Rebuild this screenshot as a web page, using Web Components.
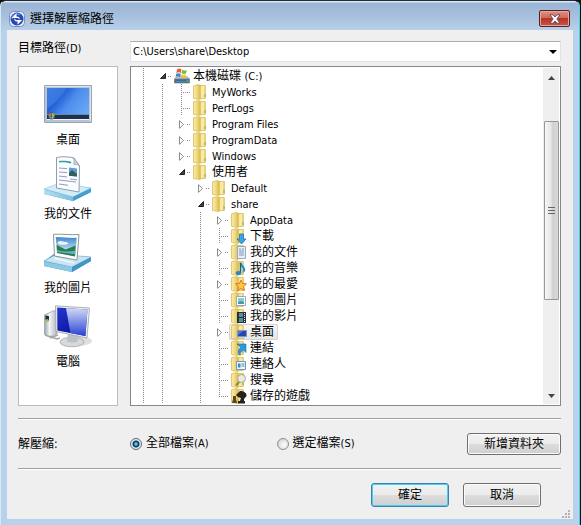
<!DOCTYPE html>
<html lang="zh-Hant">
<head>
    <meta charset="UTF-8">
    <meta name="viewport" content="width=device-width, initial-scale=1.0">
    <title>選擇解壓縮路徑</title>
    <style>
        body {
            margin: 0;
            background: #111;
            color: #000;
            font: 12px/16px "DejaVu Sans Condensed", "Noto Sans CJK TC", sans-serif;
            --side: 100px;
            --line: #a0a0a0;
        }
        .en { font-size: 11px; }
    </style>
</head>
<body>
    <dialog-window>
        <span slot="title">選擇解壓縮路徑</span>

        <path-picker></path-picker>

        <folder-browser>
            <side-place slot="side" icon="desktop">桌面</side-place>
            <side-place slot="side" icon="documents">我的文件</side-place>
            <side-place slot="side" icon="pictures">我的圖片</side-place>
            <side-place slot="side" icon="computer">電腦</side-place>

            <!-- lines: | guide, . empty, t branch, L last branch, > closed, v open -->
            <tree-row lines="|v" icon="disk">本機磁碟 <span class="en">(C:)</span></tree-row>
            <tree-row lines="||t"><span class="en">MyWorks</span></tree-row>
            <tree-row lines="||t"><span class="en">PerfLogs</span></tree-row>
            <tree-row lines="||>"><span class="en">Program Files</span></tree-row>
            <tree-row lines="||>"><span class="en">ProgramData</span></tree-row>
            <tree-row lines="||>"><span class="en">Windows</span></tree-row>
            <tree-row lines="||v">使用者</tree-row>
            <tree-row lines="||.>"><span class="en">Default</span></tree-row>
            <tree-row lines="||.v"><span class="en">share</span></tree-row>
            <tree-row lines="||.|>"><span class="en">AppData</span></tree-row>
            <tree-row lines="||.|t" badge="download">下載</tree-row>
            <tree-row lines="||.|>" badge="doc">我的文件</tree-row>
            <tree-row lines="||.|t" badge="music">我的音樂</tree-row>
            <tree-row lines="||.|>" badge="star">我的最愛</tree-row>
            <tree-row lines="||.|t" badge="picture">我的圖片</tree-row>
            <tree-row lines="||.|t" badge="film">我的影片</tree-row>
            <tree-row lines="||.|>" badge="screen" selected>桌面</tree-row>
            <tree-row lines="||.|t" badge="link">連結</tree-row>
            <tree-row lines="||.|t" badge="contact">連絡人</tree-row>
            <tree-row lines="||.|t" badge="search">搜尋</tree-row>
            <tree-row lines="||.|L" badge="game">儲存的遊戲</tree-row>
        </folder-browser>

        <extract-options>
            <push-button slot="action">新增資料夾</push-button>
        </extract-options>

        <button-bar>
            <push-button wide primary>確定</push-button>
            <push-button wide>取消</push-button>
        </button-bar>
    </dialog-window>

    <template id="window-tpl">
        <style>
            :host {
                display: flex;
                flex-direction: column;
                box-sizing: border-box;
                min-height: 100vh;
                margin-right: 1px;
                padding: 0 6px 6px 6px;
                border: solid;
                border-width: 1px 1px 0 1px;
                border-color: #262b38 #3fd6ec #3fd6ec #d9e8f6;
                border-radius: 6px 6px 0 0;
                background: linear-gradient(#dce9f5 0 1px, #9ab5d4 2px, #a5bfdc 14px, #b9d1ea 30px);
            }
            header {
                display: flex;
                align-items: center;
                height: 29px;
                padding: 6px 3px 0 2px;
                box-sizing: border-box;
            }
            .logo { width: 16px; height: 16px; margin-right: 5px; }
            h1 { flex: 1; margin: 0; font: inherit; }
            .close {
                width: 31px;
                height: 17px;
                padding: 0;
                display: grid;
                place-items: center;
                border: 1px solid #571f22;
                border-radius: 2px;
                box-shadow: inset 0 0 0 1px #e5a79d;
                background: linear-gradient(#dc9287, #cf6658 48%, #b53527 50%, #c95445);
            }
            main {
                flex: 1;
                display: flex;
                flex-direction: column;
                padding: 11px 12px 0 11px;
                background: #efefef;
            }
            footer { display: flex; justify-content: flex-end; margin-top: auto; margin-right: -9px; padding-bottom: 1px; }
        </style>
        <header>
            <svg class="logo" viewBox="0 0 16 16">
                <rect x=".5" y=".5" width="15" height="15" rx="4" fill="#e8edf8" stroke="#7d8cb8"/>
                <circle cx="8" cy="8" r="6.5" fill="#2849b4"/>
                <path d="M3 8a5 5 0 0 1 8-4" fill="none" stroke="#5f86e0" stroke-width="1.5"/>
                <path d="M7.500 2.200v3.300c2.600 0 3.300 1.200 3.100 3L9 7H2.800zM8.500 13.800v-3.300c-2.600 0-3.300-1.200-3.100-3L7 9h6.200z" fill="#fff"/>
            </svg>
            <h1><slot name="title"></slot></h1>
            <button class="close" aria-label="關閉">
                <svg width="12" height="10" viewBox="0 0 12 10">
                    <path d="M1 .8h3l2 2.200 2-2.200h3L7.900 5 11 9.200H8L6 7 4 9.200H1L4.100 5z" fill="#fff" stroke="#5a4a55" stroke-width=".9"/>
                </svg>
            </button>
        </header>
        <main>
            <slot></slot>
            <footer>
                <svg width="8" height="8" viewBox="0 0 8 8" fill="#b4b4b4">
                    <path d="M6 0h2v2H6zM3 3h2v2H3zM6 3h2v2H6zM0 6h2v2H0zM3 6h2v2H3zM6 6h2v2H6z"/>
                </svg>
            </footer>
        </main>
    </template>

    <template id="picker-tpl">
        <style>
            :host { display: grid; grid-template-columns: var(--side) 1fr; column-gap: 12px; }
            label { line-height: 15px; }
            .latin { font-size: 11px; }
            .box { display: grid; }
            select, svg { grid-area: 1 / 1; }
            select {
                appearance: none;
                height: 21px;
                margin: 0;
                padding: 0 20px 0 2px;
                border: 1px solid #dde5ea;
                border-top-color: #abadb3;
                border-radius: 0;
                background: #fff;
                color: inherit;
                font: inherit;
                font-size: 11px;
            }
            svg { justify-self: end; align-self: center; margin-right: 4px; pointer-events: none; }
        </style>
        <label for="path">目標路徑<span class="latin">(D)</span></label>
        <div class="box">
            <select id="path"><option>C:\Users\share\Desktop</option></select>
            <svg width="8" height="4" viewBox="0 0 8 4"><path d="M0 0h8L4 4z"/></svg>
        </div>
    </template>

    <template id="browser-tpl">
        <style>
            :host { display: grid; grid-template-columns: var(--side) 1fr; column-gap: 12px; margin-top: 4px; }
            nav {
                display: flex;
                flex-direction: column;
                gap: 6px;
                padding-top: 13px;
                border: 1px solid #bcbcbc;
                background: #fff;
            }
            .tree { display: flex; border: 1px solid #828790; background: #fff; }
            .rows { flex: 1; min-width: 0; padding: 1px 0 1px 3px; }
            .bar {
                display: flex;
                flex-direction: column;
                align-items: center;
                width: 16px;
                margin: 1px 1px 1px 0;
                background: #efefef;
            }
            .up { margin: 8px 0 41px; }
            .down { margin: auto 0 6px; }
            .thumb {
                display: grid;
                place-items: center;
                width: 13px;
                height: 177px;
                border: 1px solid #979797;
                border-radius: 1px;
                background: linear-gradient(90deg, #f7f7f7, #e6e6e6 45%, #cfcfcf 60%, #d9d9d9);
            }
        </style>
        <nav><slot name="side"></slot></nav>
        <div class="tree">
            <div class="rows" role="tree"><slot></slot></div>
            <div class="bar">
                <svg class="up" width="7" height="4" viewBox="0 0 7 4"><path d="M0 4h7L3.500 0z" fill="#444"/></svg>
                <div class="thumb">
                    <svg width="7" height="8" viewBox="0 0 7 8" fill="#666"><path d="M0 0h7v1H0zM0 3h7v1H0zM0 6h7v1H0z"/></svg>
                </div>
                <svg class="down" width="7" height="4" viewBox="0 0 7 4"><path d="M0 0h7L3.500 4z" fill="#444"/></svg>
            </div>
        </div>
    </template>

    <template id="options-tpl">
        <style>
            :host {
                display: grid;
                grid-template-columns: var(--side) 1fr auto;
                column-gap: 12px;
                align-items: center;
                height: 49px;
                margin-top: 12px;
                border: solid var(--line);
                border-width: 1px 0;
                box-shadow: 0 1px #fff, inset 0 1px #fff;
            }
            .group { display: flex; gap: 68px; }
            label { display: flex; align-items: center; gap: 4px; }
            .latin { font-size: 11px; }
            input {
                appearance: none;
                box-sizing: border-box;
                width: 12px;
                height: 12px;
                margin: 0;
                border: 1px solid #8e8f8f;
                border-radius: 50%;
                background: radial-gradient(circle at 60% 60%, #f4f4f4 20%, #c5c8cc);
            }
            input:checked {
                border-color: #5c6e80;
                background: radial-gradient(circle, #5fc3ef 0 1px, #17618f 2px, #0c3658 3px, #e4ecf2 4px);
            }
        </style>
        <span id="name">解壓縮:</span>
        <div class="group" role="radiogroup" aria-labelledby="name">
            <label><input type="radio" name="scope" checked><span>全部檔案<span class="latin">(A)</span></span></label>
            <label><input type="radio" name="scope"><span>選定檔案<span class="latin">(S)</span></span></label>
        </div>
        <slot name="action"></slot>
    </template>

    <script>
        // 48x48
        const placeIcons = {
            desktop: `
                <defs><linearGradient id="g" x2="1" y2=".6"><stop stop-color="#2f6fd8"/><stop offset=".35" stop-color="#2262d6"/><stop offset=".6" stop-color="#4d8cec"/><stop offset="1" stop-color="#69a6f6"/></linearGradient></defs>
                <path d="M.5 5.500h47v37H.5z" fill="#b9c4d2" stroke="#97a4b5"/>
                <path d="M1.500 6.500h45v35" fill="none" stroke="#dfe6ee"/>
                <path d="M3 8h42v32H3z" fill="url(#g)"/>
                <path d="M3 8h20C17 18 9 25 3 28z" fill="#5f9bf0" opacity=".35"/>
                <path d="M3 34h42v5H3z" fill="#1d3050"/><path d="M3 34h42v1H3z" fill="#6a86ad"/>
                <path d="M3 39h42v1H3z" fill="#f2f6fa"/>
                <circle cx="7.500" cy="36" r="3.600" fill="#2c5a78"/>
                <path d="M4.500 33.500l2.700-.6v3H4.500z" fill="#e8643a"/><path d="M7.800 33l2.700.6v2.300H7.800z" fill="#8bc64a"/>
                <path d="M4.500 36.500h2.700v2.800z" fill="#4aa5e8"/><path d="M7.800 36.500h2.700l-2.700 2.800z" fill="#f4cc45"/>`,
            documents: `
                <defs><linearGradient id="g" x2="1"><stop stop-color="#b7dff0"/><stop offset="1" stop-color="#7dbfe0"/></linearGradient></defs>
                <path d="M0 36l15-5 32 3v4L29 47 0 40z" fill="#3f9cc9"/>
                <path d="M0 35l16-6 31 5-18 9z" fill="#d3edf7" stroke="#86bedb" stroke-width=".6"/>
                <path d="M0 35.500l29 7.500v4L0 40z" fill="url(#g)"/>
                <path d="M29 43l18-8.500V38l-18 9z" fill="#479fce"/>
                <path d="M12.500 3.500c7-1.400 11-.6 17 .2l6 8-.5 26.300-22.500-4z" fill="#fbfcff" stroke="#8e9dad"/>
                <path d="M29.500 3.700c1 3 .8 5 .2 6.600 2 .2 4 .3 5.800 1.400z" fill="#cad5e1" stroke="#8898aa" stroke-width=".7"/>
                <path d="M15 7c4-.6 7-.4 12 .8v1.700C22 8.200 19 8 15 8.500z" fill="#349a9c"/>
                <path d="M15 14l8 .6M15 18l8 .6M15 22l8 1M15 26l17 2M15 30l9 1.300M26 25l7 .8" stroke="#9599b8" fill="none"/>
                <path d="M25 13.500l8 1v8l-8-.8z" fill="#5c9fd8"/><path d="M25 19l3-3 5 4v2.500l-8-.8z" fill="#355e58"/>`,
            pictures: `
                <defs><linearGradient id="g" x2="0" y2="1"><stop stop-color="#3d86cf"/><stop offset=".6" stop-color="#a8d6ee"/></linearGradient></defs>
                <path d="M0 33l10-7 37 3v4L28 44 0 38z" fill="#3b93c2"/>
                <path d="M0 33l13-7 34 3-19 10z" fill="#c9e5f1" stroke="#7eb6d3" stroke-width=".6"/>
                <path d="M0 33.500L28 39v5L0 38z" fill="#8cc8e3"/>
                <path d="M28 39l19-9.500V33L28 44z" fill="#4296c5"/>
                <path d="M9.500 6.300c10-.6 17 1 25.500.2l-2 25.500-22.500-4z" fill="#fff" stroke="#8c959c"/>
                <path d="M11.700 9c8 0 14 1.200 21 .8l-1.500 18.500-18-3.300z" fill="url(#g)"/>
                <path d="M14 14c3-2 5 0 7 0s4 1 3 2-8 1-10 0z" fill="#fff" opacity=".85"/>
                <path d="M12.600 17l5 2.500 4 2 10-4-.6 11-18-3.500z" fill="#2f7a4a"/>
                <path d="M13 22c6 2 12 2 18.400.8l-.2 3.500-18-2.300z" fill="#5fb6c8"/>
                <path d="M10 30l20 5" stroke="#eef8fc" stroke-width="1.500"/>`,
            computer: `
                <defs>
                    <linearGradient id="g" x2="1" y2="0"><stop stop-color="#9aa2ab"/><stop offset=".4" stop-color="#f2f4f6"/><stop offset="1" stop-color="#b3b8bd"/></linearGradient>
                    <linearGradient id="h" x2=".6" y2="1"><stop stop-color="#2338d0"/><stop offset="1" stop-color="#0a109c"/></linearGradient>
                    <linearGradient id="k" x2="0" y2="1"><stop stop-color="#f2f7ff"/><stop offset="1" stop-color="#2c4ce0"/></linearGradient>
                </defs>
                <ellipse cx="34" cy="39" rx="14" ry="5" fill="#ccc" opacity=".6"/>
                <path d="M.5 13L10 8.500l3 1.500v22l-8 3-4.500-2.500z" fill="url(#g)" stroke="#969da4" stroke-width=".7"/>
                <path d="M1.500 13.500l3.500.8v4.500L1.500 18z" fill="#222b2f"/><circle cx="3.200" cy="18.500" r="1.600" fill="#8fd03c"/>
                <path d="M1 33l12 4 3-1M6 36l8-3" stroke="#a2a7ac" stroke-width="1.500" fill="none"/>
                <ellipse cx="28" cy="40" rx="12" ry="4.800" fill="#d7dadd" stroke="#989da2" stroke-width=".7"/>
                <path d="M24 31h9l1 8c-3 2-8 2-11 0z" fill="#bcc1c6"/>
                <path d="M11.500 3.800L45.500 6 43 36l-31-6.500z" fill="#eceff2" stroke="#9aa1a8" stroke-width=".8"/>
                <path d="M13.200 5.600L43.500 7.600 41.400 34l-28-5.500z" fill="url(#h)"/>
                <path d="M22 6.200l21.500 1.400-2.100 26.400-15-3z" fill="url(#k)" opacity=".85"/>`
        };

        // lower right corner of an 18x16 folder
        const badges = {
            download: '<path d="M8.500 6h4v5h2.500l-4.500 5L6 11h2.500z" fill="#36a5ea" stroke="#1a66ae" stroke-width=".7"/>',
            doc: '<path d="M6.500 2.500h8v12h-8z" fill="#e9eff8" stroke="#9aa8ba"/><path d="M8 5h2M11 5h2M8 7h5M8 9h5M8 11h5" stroke="#7c95bd"/>',
            music: '<path d="M9.500 2.500c0 4 5 4 3.500 9" fill="none" stroke="#2a8fbe" stroke-width="2"/><path d="M9.500 3v10" stroke="#15648f" stroke-width="1.500"/><ellipse cx="7.500" cy="13" rx="2.800" ry="2" fill="#2389c0"/>',
            star: '<path d="M10 4l1.600 3.500 3.900.3-2.900 2.700.9 4-3.500-2-3.500 2 .9-4-2.900-2.700 3.900-.3z" fill="#ffc83e" stroke="#e0761a"/>',
            picture: '<path d="M5.500 4.500h9v9h-9z" fill="#fff" stroke="#94abb5"/><path d="M7 6h6v6H7z" fill="#8accdf"/><path d="M7 10l3-1 3 1v2H7z" fill="#4a9c90"/>',
            film: '<path d="M6 4h9v11H6z" fill="#2a3036"/><path d="M8 5h4v4H8zM8 10h4v4H8z" fill="#4b94a8"/><path d="M13.500 5v10" stroke="#e6e6e6" stroke-dasharray="1 1"/>',
            screen: '<path d="M6.500 6.500h9v6h-9z" fill="#2546ac" stroke="#7d96bb"/><path d="M7 7h5l-5 4z" fill="#5878d8"/><path d="M6 14h8" stroke="#c4c4c4"/>',
            link: '<path d="M6 4h9v8.500l-2.700-2.700C10 11.500 9 13 9 15.500c-3-3-1.500-6.500.8-8z" fill="#2a9ae0" stroke="#176bb0" stroke-width=".6"/>',
            contact: '<path d="M5.500 5.500h9v8h-9z" fill="#eef6fb" stroke="#6a9cba"/><path d="M7 7.500h2.500v4H7z" fill="#3689c6"/><path d="M10.500 8h3M10.500 10h3" stroke="#5584a8"/>',
            search: '<path d="M8.500 9.500L5 13.500" stroke="#9b8446" stroke-width="2"/><circle cx="10.500" cy="6.500" r="4" fill="#e6eede" fill-opacity=".85" stroke="#a3a694"/>',
            game: '<path d="M9 3c4 0 7 2 6.500 5l-2.500 3v2h1v2.500H7V13h2l1-3-3-1-2-2z" fill="#28211b"/><path d="M2 8h3v3l1 4H1l1-4z" fill="#594822"/>'
        };

        const folder = `
            <defs><linearGradient id="f" x2="1"><stop stop-color="#f9edaa"/><stop offset=".5" stop-color="#f0da84"/><stop offset="1" stop-color="#dcb94c"/></linearGradient></defs>
            <path d="M5.500 1.500h6.800v13H5.500z" fill="#f1dd88" stroke="#d6b858" stroke-width=".8"/>
            <path d="M.5 1.800L5.500.5l1.800 1v14L.5 14.500z" fill="url(#f)" stroke="#d9bc5c" stroke-width=".8"/>
            <path d="M8 2.500l3-1v12l-3 1z" fill="#f8eaa0"/>
            <path d="M12 10v3" stroke="#82a96a"/>`;

        const disk = `
            <path d="M0 10.500l3-2.500h10l3 2.500V15H0z" fill="#b3bec8"/>
            <path d="M.5 11h15v4H.5z" fill="#4d687e" stroke="#74889a" stroke-width=".7"/>
            <path d="M2 13.500h9" stroke="#2b94cc"/><path d="M12.500 12.500h2v1h-2z" fill="#76e05e"/>
            <path d="M3 1.500c2-1.300 3-1.300 4.500 0L6.800 5C5.500 4 4 4.200 2.300 5z" fill="#e8612e"/>
            <path d="M8.300 1.700c1.500 1 3 1 4.500.2L12 5.500c-1.500.8-3 .5-4.400-.2z" fill="#7bbb3d"/>
            <path d="M2.200 5.800C4 5 5.500 5 6.800 5.900L6.200 9C5 8 3.300 8 1.600 8.700z" fill="#3c86d8"/>
            <path d="M7.500 6.200c1.400.8 3 .9 4.500.2l-.8 3c-1.400.8-3 .6-4.400-.2z" fill="#f6c136"/>`;

        const stamp = (el, id) => {
            el.attachShadow({ mode: 'open' }).append(document.getElementById(id).content.cloneNode(true));
        };

        customElements.define('dialog-window', class extends HTMLElement {
            connectedCallback() { stamp(this, 'window-tpl'); }
        });

        customElements.define('path-picker', class extends HTMLElement {
            connectedCallback() { stamp(this, 'picker-tpl'); }
        });

        customElements.define('folder-browser', class extends HTMLElement {
            connectedCallback() { stamp(this, 'browser-tpl'); }
        });

        customElements.define('extract-options', class extends HTMLElement {
            connectedCallback() { stamp(this, 'options-tpl'); }
        });

        customElements.define('side-place', class extends HTMLElement {
            connectedCallback() {
                this.attachShadow({ mode: 'open' }).innerHTML = `
                    <style>
                        :host { display: block; }
                        a {
                            display: flex;
                            flex-direction: column;
                            align-items: center;
                            gap: 4px;
                            color: inherit;
                            text-decoration: none;
                        }
                    </style>
                    <a href="#">
                        <svg width="48" height="48" viewBox="0 0 48 48">${placeIcons[this.getAttribute('icon')]}</svg>
                        <slot></slot>
                    </a>`;
            }
        });

        const cells = {
            '|': '<i class="v"></i>',
            '.': '<i></i>',
            't': '<i class="v h"></i>',
            'L': '<i class="l"></i>',
            '>': '<i class="arrow"><svg width="5" height="9" viewBox="0 0 5 9"><path d="M.5.7v7.600L4.500 4.500z" fill="#fff" stroke="#8c8c8c"/></svg></i>',
            'v': '<i class="arrow"><svg width="7" height="6" viewBox="0 0 7 6"><path d="M6.500.5v5h-5z" fill="#404040" stroke="#222"/></svg></i>'
        };

        customElements.define('tree-row', class extends HTMLElement {
            connectedCallback() {
                const badge = badges[this.getAttribute('badge')] || '';
                const art = this.getAttribute('icon') === 'disk' ? disk : folder + badge;
                this.setAttribute('role', 'treeitem');
                this.attachShadow({ mode: 'open' }).innerHTML = `
                    <style>
                        :host {
                            display: flex;
                            height: 16px;
                            white-space: nowrap;
                            --down: repeating-linear-gradient(#888 0 1px, transparent 1px 2px);
                            --across: repeating-linear-gradient(90deg, #888 0 1px, transparent 1px 2px);
                        }
                        i { width: 19px; background-repeat: no-repeat; }
                        .v { background-image: var(--down); background-size: 1px 16px; background-position: 9px 0; }
                        .h { background-image: var(--down), var(--across); background-size: 1px 16px, 10px 1px; background-position: 9px 0, 9px 8px; }
                        .l { background-image: var(--down), var(--across); background-size: 1px 9px, 10px 1px; background-position: 9px 0, 9px 8px; }
                        .arrow {
                            display: grid;
                            place-items: center;
                            background-image: var(--across);
                            background-size: 4px 1px;
                            background-position: 15px 8px;
                        }
                        .item { display: flex; gap: 3px; padding-right: 4px; border-radius: 2px; }
                        :host([selected]) .item { background: linear-gradient(#f8f8f8, #e5e5e5); box-shadow: inset 0 0 0 1px #d4d4d4; }
                    </style>
                    ${[...this.getAttribute('lines')].map(c => cells[c]).join('')}
                    <span class="item">
                        <svg width="18" height="16" viewBox="-2 0 18 16">${art}</svg>
                        <span><slot></slot></span>
                    </span>`;
            }
        });

        customElements.define('push-button', class extends HTMLElement {
            connectedCallback() {
                this.attachShadow({ mode: 'open' }).innerHTML = `
                    <style>
                        :host { display: block; }
                        button {
                            display: block;
                            box-sizing: border-box;
                            height: 22px;
                            padding: 0 16px;
                            border: 1px solid #707070;
                            border-radius: 3px;
                            box-shadow: inset 0 0 0 1px #fbfbfb;
                            background: linear-gradient(#f2f2f2, #ebebeb 49%, #dddddd 50%, #cfcfcf);
                            color: inherit;
                            font: inherit;
                        }
                        :host([wide]) button { width: 78px; height: 24px; }
                        :host([primary]) button { border-color: #3c7fb1; box-shadow: inset 0 0 0 1px #48d0f3; }
                    </style>
                    <button><slot></slot></button>`;
            }
        });

        customElements.define('button-bar', class extends HTMLElement {
            connectedCallback() {
                this.attachShadow({ mode: 'open' }).innerHTML = `
                    <style>
                        :host { display: flex; justify-content: flex-end; gap: 14px; padding: 14px 20px 0 0; }
                    </style>
                    <slot></slot>`;
            }
        });
    </script>
</body>
</html>
